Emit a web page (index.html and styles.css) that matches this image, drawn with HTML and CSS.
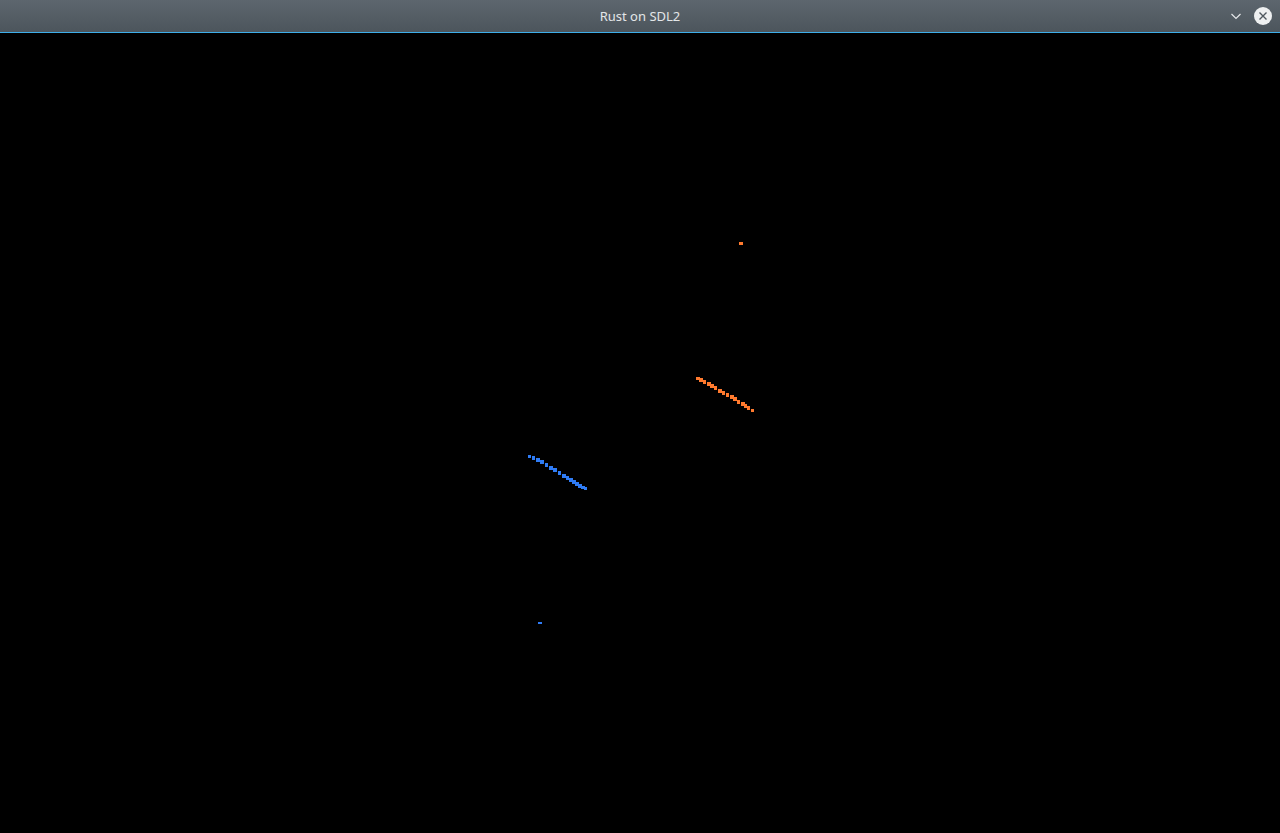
FILE: index.html
```html
<!DOCTYPE html>
<html>
<head>
<meta charset="utf-8">
<title>Rust on SDL2</title>
<link rel="stylesheet" href="styles.css">
</head>
<body>
<div class="window">
  <header class="titlebar">
    <div class="title">Rust on SDL2</div>
    <div class="controls">
      <svg class="btn-min" width="14" height="14" viewBox="0 0 14 14"><path d="M2.5 5 L7 9.5 L11.5 5" fill="none" stroke="#e6e8ea" stroke-width="1.2"/></svg>
      <svg class="btn-close" width="18" height="18" viewBox="0 0 18 18"><circle cx="9" cy="9" r="9" fill="#eef0f1"/><path d="M5.5 5.5 L12.5 12.5 M12.5 5.5 L5.5 12.5" stroke="#4f585f" stroke-width="1.4"/></svg>
    </div>
  </header>
  <main class="canvas">
    <svg class="scene" width="1280" height="800" viewBox="0 0 1280 800" shape-rendering="crispEdges">
      <g fill="#ff7a2e">
        <rect x="739" y="209" width="4" height="3"/>
        <rect x="696" y="344" width="4" height="3"/>
        <rect x="699" y="345" width="4" height="4"/>
        <rect x="703" y="347" width="3" height="4"/>
        <rect x="707" y="349" width="4" height="4"/>
        <rect x="710" y="351" width="4" height="4"/>
        <rect x="714" y="353" width="3" height="4"/>
        <rect x="718" y="356" width="4" height="4"/>
        <rect x="722" y="358" width="3" height="4"/>
        <rect x="726" y="360" width="3" height="4"/>
        <rect x="730" y="362" width="4" height="4"/>
        <rect x="733" y="364" width="4" height="4"/>
        <rect x="737" y="367" width="3" height="4"/>
        <rect x="741" y="369" width="4" height="4"/>
        <rect x="744" y="371" width="3" height="4"/>
        <rect x="747" y="373" width="3" height="4"/>
        <rect x="751" y="376" width="3" height="3"/>
      </g>
      <g fill="#2f7cf6">
        <rect x="538" y="589" width="4" height="2"/>
        <rect x="528" y="422" width="3" height="3"/>
        <rect x="532" y="423" width="3" height="4"/>
        <rect x="536" y="425" width="4" height="4"/>
        <rect x="540" y="427" width="4" height="4"/>
        <rect x="545" y="430" width="3" height="4"/>
        <rect x="549" y="433" width="4" height="4"/>
        <rect x="553" y="435" width="4" height="4"/>
        <rect x="558" y="438" width="3" height="4"/>
        <rect x="562" y="441" width="4" height="4"/>
        <rect x="566" y="443" width="3" height="4"/>
        <rect x="569" y="445" width="4" height="4"/>
        <rect x="572" y="447" width="4" height="4"/>
        <rect x="575" y="449" width="4" height="4"/>
        <rect x="578" y="451" width="4" height="4"/>
        <rect x="581" y="453" width="4" height="3"/>
        <rect x="584" y="454" width="3" height="3"/>
      </g>
    </svg>
  </main>
</div>
</body>
</html>
```
FILE: styles.css
```css
html, body {
  margin: 0;
  padding: 0;
  background: #000;
  overflow: hidden;
}
.window {
  width: 1280px;
  height: 833px;
  display: flex;
  flex-direction: column;
}
.titlebar {
  height: 32px;
  border-bottom: 1px solid #3daee9;
  background: linear-gradient(to bottom, #5d666e, #4c555c);
  position: relative;
  display: flex;
  align-items: center;
  justify-content: center;
  flex-shrink: 0;
}
.title {
  font-family: "Noto Sans", "DejaVu Sans", sans-serif;
  font-size: 13px;
  color: #e3e6e8;
  line-height: 32px;
}
.controls {
  position: absolute;
  right: 8px;
  top: 7px;
  display: flex;
  align-items: center;
  gap: 11px;
}
.btn-min, .btn-close {
  display: block;
}
.canvas {
  flex: 1;
  background: #000;
}
.scene {
  display: block;
}
```
